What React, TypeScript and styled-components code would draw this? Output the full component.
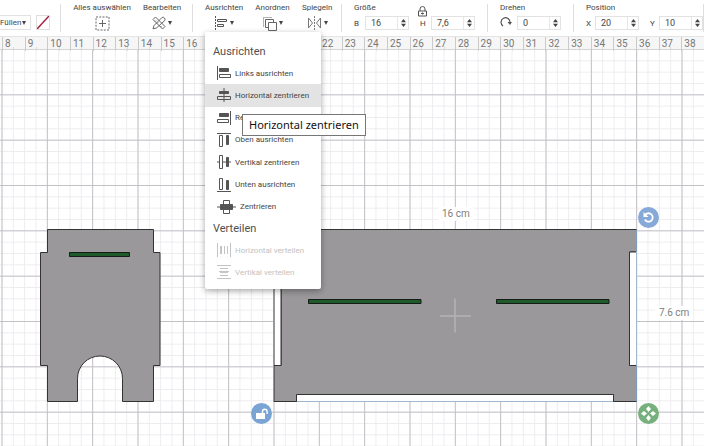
import React from "react";
import styled, { createGlobalStyle } from "styled-components";

const GlobalStyle = createGlobalStyle`
  * { box-sizing: border-box; }
  html, body, #root { height: 100%; }
  body {
    margin: 0;
    overflow: hidden;
    background: #fff;
    color: #444;
    font-family: Roboto, "Liberation Sans", sans-serif;
    font-size: 8px;
  }
  button, input { font: inherit; color: inherit; }
`;

const Editor = styled.div`
  display: flex;
  flex-direction: column;
  min-height: 100%;
`;

/* ---------- toolbar ---------- */

const Toolbar = styled.header`
  position: relative;
  display: flex;
  height: 36px;
  background: #fff;
`;

const Section = styled.div<{ $width: number }>`
  position: relative;
  display: flex;
  flex: 0 0 ${(p) => p.$width}px;
  gap: 12px;
  padding: 2px 0 0 12px;

  &:not(:last-child)::after {
    content: "";
    position: absolute;
    top: 4px;
    right: 0;
    height: 28px;
    border-right: 1px solid #dedede;
  }
`;

const FillSection = styled(Section)`
  align-items: flex-start;
  gap: 5px;
  padding: 15px 0 0;
`;

const FillButton = styled.button`
  display: flex;
  align-items: center;
  justify-content: space-between;
  width: 31px;
  height: 15px;
  padding: 0 4px 0 0;
  border: 1px solid #e2e2e2;
  border-left: 0;
  background: #fff;
`;

const Swatch = styled.button`
  width: 14px;
  height: 15px;
  padding: 0;
  border: 1px solid #e0dcde;
  background: #fff;

  svg { display: block; }
`;

const Tool = styled.div<{ $width: number }>`
  display: flex;
  flex-direction: column;
  align-items: center;
  flex: 0 0 ${(p) => p.$width}px;
`;

const Caption = styled.span`
  height: 11px;
  line-height: 11px;
  white-space: nowrap;
`;

const ToolButton = styled.button`
  display: flex;
  align-items: center;
  gap: 2px;
  height: 20px;
  padding: 0;
  border: 0;
  background: none;
`;

const Fields = styled.fieldset`
  display: flex;
  flex-direction: column;
  width: 100%;
  margin: 0;
  padding: 0;
  border: 0;
`;

const Legend = styled.legend`
  height: 11px;
  padding: 0;
  line-height: 11px;
`;

const FieldRow = styled.div`
  display: flex;
  align-items: center;
  gap: 11px;
  height: 20px;
`;

const Field = styled.label<{ $lead: number }>`
  position: relative;
  display: flex;
  align-items: center;
  width: ${(p) => p.$lead + 44}px;

  > span:first-child { width: ${(p) => p.$lead}px; }
`;

const LockButton = styled.button`
  position: absolute;
  left: -2px;
  bottom: 13px;
  height: 11px;
  padding: 0;
  border: 0;
  background: none;

  svg { display: block; }
`;

const NumberBox = styled.span`
  display: flex;
  align-items: center;
  flex: 1;
  height: 14px;
  border: 1px solid #e2e2e2;

  input {
    flex: 1;
    width: 100%;
    min-width: 0;
    padding: 0 0 0 5px;
    border: 0;
    outline: 0;
    background: none;
    font-size: 9px;
  }
`;

const Spinner = styled.span`
  display: flex;
  width: 11px;
  height: 12px;
  align-items: center;
  justify-content: center;
  border-left: 1px solid #e8e8e8;
`;

/* ---------- ruler ---------- */

const Ruler = styled.div`
  display: grid;
  grid-template-columns: repeat(31, 1fr);
  height: 14px;
  padding-left: 2px;
  border-top: 1px solid #e4e4e4;
  border-bottom: 1px solid #d4d4d4;
  background: #f6f6f6;
`;

const Mark = styled.span`
  padding-left: 2px;
  border-left: 1px solid #cacaca;
  background: linear-gradient(#d8d8d8, #d8d8d8) 50% 100% / 1px 4px no-repeat;
  color: #777;
  font-size: 10px;
  line-height: 14px;
`;

/* ---------- canvas ---------- */

const Canvas = styled.main`
  position: relative;
  flex: 1;
  overflow: hidden;
`;

const Scene = styled.svg`
  position: absolute;
  inset: 0;
  width: 100%;
  height: 100%;
`;

const Measure = styled.span<{ $x: number; $y: number }>`
  position: absolute;
  left: ${(p) => p.$x}px;
  top: ${(p) => p.$y}px;
  padding: 0 4px;
  background: #fff;
  color: #808080;
  font-size: 10px;
  line-height: 14px;
  white-space: nowrap;
`;

const Handle = styled.button<{ $x: number; $y: number; $color: string }>`
  position: absolute;
  left: ${(p) => p.$x}px;
  top: ${(p) => p.$y}px;
  display: grid;
  place-items: center;
  width: 21px;
  height: 21px;
  padding: 0;
  border: 0;
  border-radius: 50%;
  background: ${(p) => p.$color};
`;

/* ---------- menu ---------- */

const Menu = styled.div`
  position: absolute;
  z-index: 2;
  top: 32px;
  left: 205px;
  width: 116px;
  height: 257px;
  padding-top: 9px;
  border-radius: 2px;
  background: #fff;
  box-shadow: 0 2px 6px rgba(0, 0, 0, 0.35);
`;

const MenuHeading = styled.h2`
  margin: 0;
  padding: 1px 0 0 8px;
  color: #505050;
  font-size: 11px;
  font-weight: 400;
  line-height: 20px;
`;

const MenuList = styled.div<{ $height: number }>`
  display: grid;
  grid-auto-rows: 1fr;
  height: ${(p) => p.$height}px;
`;

const MenuItem = styled.button<{ $active?: boolean }>`
  display: flex;
  align-items: center;
  gap: 4px;
  padding: 0 0 0 12px;
  border: 0;
  background: ${(p) => (p.$active ? "#e3e3e3" : "transparent")};
  color: #444;
  white-space: nowrap;

  &:disabled { color: #c2c2c2; }
`;

const Tooltip = styled.div`
  position: absolute;
  z-index: 3;
  top: 114px;
  left: 242px;
  padding: 0 6px;
  border: 1px solid #767676;
  background: #fff;
  color: #111;
  font-family: "Noto Sans", "Open Sans", sans-serif;
  font-size: 11px;
  line-height: 20px;
  white-space: nowrap;
`;

/* ---------- icons ---------- */

const Caret = () => (
  <svg width="4" height="4" viewBox="0 0 4 4" aria-hidden="true">
    <path d="M0 0h4L2 4z" fill="#444" />
  </svg>
);

const SelectAllIcon = () => (
  <svg width="15" height="15" viewBox="0 0 15 15" fill="none" stroke="#666">
    <rect x="1" y="1" width="13" height="13" strokeDasharray="2 1.250" />
    <path d="M7.500 4v7M4 7.500h7" />
  </svg>
);

const EditIcon = () => (
  <svg width="14" height="14" viewBox="0 0 14 14" fill="none" stroke="#666">
    <path d="M1 12.800 2 9.500 10 1.500q1.500-.8 2.500.5t.3 2.500L4.500 12z" />
    <path d="M1 3.500 3.500 1l9.500 9.500-2.500 2.500zM3 5.500l1-1M5 7.500l1-1M8.500 11l1-1" />
  </svg>
);

const AlignIcon = () => (
  <svg width="14" height="14" viewBox="0 0 14 14" fill="none" stroke="#555">
    <path d="M1.500 0v14" strokeDasharray="2 1" />
    <path d="M3.500 3.500h9v2h-9zM3.500 8.500h6v2h-6z" />
  </svg>
);

const ArrangeIcon = () => (
  <svg width="15" height="15" viewBox="0 0 15 15" stroke="#666">
    <path d="M1.500 10.500v-9h9" fill="none" strokeDasharray="1 1" />
    <path d="M3.500 3.500h8v8h-8z" fill="#fff" />
    <path d="M6.500 6.500h8v8h-8z" fill="#fff" />
  </svg>
);

const MirrorIcon = () => (
  <svg width="15" height="14" viewBox="0 0 15 14" fill="none" stroke="#777">
    <path d="M1.500 2v10L5.500 7zM13.500 2v10l-4-5z" />
    <path d="M7.500 0v14" strokeDasharray="2 1" />
  </svg>
);

const LockIcon = () => (
  <svg width="9" height="11" viewBox="0 0 9 11" fill="none" stroke="#555">
    <path d="M2 5V3a2.500 2.500 0 0 1 5 0V5M.5 5h8v5h-8zM4.500 6.500v2M3 7.500h3" />
  </svg>
);

const RotateIcon = () => (
  <svg width="12" height="12" viewBox="0 0 12 12">
    <path d="M3 10A4.500 4.500 0 1 1 10 6.500" fill="none" stroke="#555" strokeWidth="1.200" />
    <path d="M7.500 6h4.500L10 9z" fill="#555" />
  </svg>
);

const StepperIcon = () => (
  <svg width="5" height="8" viewBox="0 0 5 8" fill="#444">
    <path d="M0 3.200 2.500 0 5 3.200zM0 4.800h5L2.500 8z" />
  </svg>
);

type MenuIconName =
  | "left" | "centerX" | "right" | "top" | "centerY" | "bottom" | "center" | "spreadX" | "spreadY";

const menuDrawings: Record<MenuIconName, React.ReactNode> = {
  left: (
    <>
      <path d="M.5 0v14" />
      <path d="M2.500 2.500h9v3h-9z" fill="#555" />
      <path d="M2.500 8.500h11v3h-11z" />
    </>
  ),
  centerX: (
    <>
      <path d="M2.500 3.500h9v2h-9z" fill="#555" />
      <path d="M.5 8.500h13v3H.5z" />
      <path d="M7 0v14" />
    </>
  ),
  right: (
    <>
      <path d="M13.500 0v14" />
      <path d="M2.500 2.500h9v3h-9z" fill="#555" />
      <path d="M.5 8.500h11v3H.5z" />
    </>
  ),
  top: (
    <>
      <path d="M0 .5h14" />
      <path d="M2.500 2.500h3v11h-3z" />
      <path d="M9.500 2.500h2v9h-2z" fill="#555" />
    </>
  ),
  centerY: (
    <>
      <path d="M0 7h14" />
      <path d="M2.500 .5h3v13h-3z" fill="#fff" />
      <path d="M9.500 2.500h2v9h-2z" fill="#555" />
    </>
  ),
  bottom: (
    <>
      <path d="M0 13.500h14" />
      <path d="M2.500 .5h3v11h-3z" />
      <path d="M9.500 2.500h2v9h-2z" fill="#555" />
    </>
  ),
  center: (
    <>
      <path d="M6.500 .5h6v13h-6z" fill="#fff" />
      <path d="M3.500 4.500h12v5h-12z" fill="#555" />
      <path d="M0 7h19" />
    </>
  ),
  spreadX: <path d="M.5 0v14M13.500 0v14M3.500 3v8M4.500 3v8M7.500 3v8M10.500 3v8" />,
  spreadY: <path d="M0 .5h14M0 13.500h14M3 3.500h8M2 6.500h10M3 7.500h8M3 10.500h8" />,
};

const MenuIcon = ({ name }: { name: MenuIconName }) => {
  const width = name === "center" ? 19 : 14;
  const muted = name === "spreadX" || name === "spreadY";
  return (
    <svg width={width} height="14" viewBox={`0 0 ${width} 14`} fill="none" stroke={muted ? "#c4c4c4" : "#555"} aria-hidden="true">
      {menuDrawings[name]}
    </svg>
  );
};

/* ---------- parts ---------- */

const alignItems: { label: string; icon: MenuIconName }[] = [
  { label: "Links ausrichten", icon: "left" },
  { label: "Horizontal zentrieren", icon: "centerX" },
  { label: "Rechts ausrichten", icon: "right" },
  { label: "Oben ausrichten", icon: "top" },
  { label: "Vertikal zentrieren", icon: "centerY" },
  { label: "Unten ausrichten", icon: "bottom" },
  { label: "Zentrieren", icon: "center" },
];

const spreadItems: { label: string; icon: MenuIconName }[] = [
  { label: "Horizontal verteilen", icon: "spreadX" },
  { label: "Vertikal verteilen", icon: "spreadY" },
];

const NumberField = ({ lead, lock, children, value, name }: {
  lead: number; lock?: boolean; children: React.ReactNode; value: string; name: string;
}) => (
  <Field $lead={lead}>
    <span>{children}</span>
    {lock && <LockButton aria-label="Proportionen sperren"><LockIcon /></LockButton>}
    <NumberBox>
      <input aria-label={name} defaultValue={value} />
      <Spinner><StepperIcon /></Spinner>
    </NumberBox>
  </Field>
);

const ToolItem = ({ label, width, icon, menu = true }: {
  label: string; width: number; icon: React.ReactNode; menu?: boolean;
}) => (
  <Tool $width={width}>
    <Caption>{label}</Caption>
    <ToolButton aria-label={label}>
      {icon}
      {menu && <Caret />}
    </ToolButton>
  </Tool>
);

const marks = Array.from({ length: 31 }, (_, i) => i + 8);
const MAJOR = 136 / 3;
const MINOR = MAJOR / 4;

const Drawing = () => (
  <Scene aria-hidden="true">
    <defs>
      <pattern id="minor" x="1.500" y="-1" width={MINOR} height={MINOR} patternUnits="userSpaceOnUse">
        <path d={`M.5 0V${MINOR}M0 .5H${MINOR}`} stroke="#edebef" fill="none" />
      </pattern>
      <pattern id="major" x="1.500" y="-1" width={MAJOR} height={MAJOR} patternUnits="userSpaceOnUse">
        <path d={`M.5 0V${MAJOR}M0 .5H${MAJOR}`} stroke="#c3c1c6" fill="none" />
      </pattern>
    </defs>
    <rect width="100%" height="100%" fill="url(#minor)" />
    <rect width="100%" height="100%" fill="url(#major)" />

    <g fill="#9a989a" stroke="#333">
      <path d="M47.500 179.500h106v23h6.500v113h-6.500v36h-31v-23a22.500 22.500 0 0 0-45 0v23h-30v-36h-7v-113h7z" />
      <path d="M274 179.500h362.500v22.500h-7v113.500h7v36h-23v-7H296.500v7H274v-36h7V202h-7z" />
    </g>
    <path d="M629.500 202h7v113.500h-7zM274 202h7v113.500h-7zM296.500 344.500h317v7h-317z" fill="#fff" stroke="#333" />
    <path d="M273.500 179.500V351.500M636.500 179.500V351.500" stroke="#7f9dbb" />
    <path d="M636.500 202.500v112.500M297 351.500h316" stroke="#fff" />
    <path d="M636.500 202.500v112.500M297 351.500h316" stroke="#9fb6cc" />
    <g fill="#1f5a2b" stroke="#151b16">
      <path d="M69.500 202.500h60v4h-60zM308.500 249.500h112.500v4H308.500zM496.500 249.500H609v4H496.500z" />
    </g>
    <path d="M455 248.500v34M440 266h31" stroke="#b4b3b5" strokeWidth="1.500" />
  </Scene>
);

export default function App() {
  return (
    <Editor>
      <GlobalStyle />
      <Toolbar>
        <FillSection $width={61}>
          <FillButton>Füllen <Caret /></FillButton>
          <Swatch aria-label="Keine Füllung">
            <svg width="12" height="13" viewBox="0 0 12 13">
              <path d="M0 13 12 0" stroke="#a51c3c" strokeWidth="1.500" />
            </svg>
          </Swatch>
        </FillSection>
        <Section $width={132}>
          <ToolItem label="Alles auswählen" width={58} icon={<SelectAllIcon />} menu={false} />
          <ToolItem label="Bearbeiten" width={38} icon={<EditIcon />} />
        </Section>
        <Section $width={149}>
          <ToolItem label="Ausrichten" width={37} icon={<AlignIcon />} />
          <ToolItem label="Anordnen" width={34} icon={<ArrangeIcon />} />
          <ToolItem label="Spiegeln" width={31} icon={<MirrorIcon />} />
        </Section>
        <Section $width={146}>
          <Fields>
            <Legend>Größe</Legend>
            <FieldRow>
              <NumberField lead={11} value="16" name="Breite">B</NumberField>
              <NumberField lead={11} value="7,6" name="Höhe" lock>H</NumberField>
            </FieldRow>
          </Fields>
        </Section>
        <Section $width={86}>
          <Fields>
            <Legend>Drehen</Legend>
            <FieldRow>
              <NumberField lead={17} value="0" name="Winkel"><RotateIcon /></NumberField>
            </FieldRow>
          </Fields>
        </Section>
        <Section $width={130}>
          <Fields>
            <Legend>Position</Legend>
            <FieldRow>
              <NumberField lead={9} value="20" name="X">X</NumberField>
              <NumberField lead={9} value="10" name="Y">Y</NumberField>
            </FieldRow>
          </Fields>
        </Section>
        <Menu>
          <MenuHeading>Ausrichten</MenuHeading>
          <MenuList $height={156}>
            {alignItems.map((item, i) => (
              <MenuItem key={item.label} $active={i === 1}>
                <MenuIcon name={item.icon} />
                {item.label}
              </MenuItem>
            ))}
          </MenuList>
          <MenuHeading>Verteilen</MenuHeading>
          <MenuList $height={44}>
            {spreadItems.map((item) => (
              <MenuItem key={item.label} disabled>
                <MenuIcon name={item.icon} />
                {item.label}
              </MenuItem>
            ))}
          </MenuList>
        </Menu>
        <Tooltip role="tooltip">Horizontal zentrieren</Tooltip>
      </Toolbar>
      <Ruler>
        {marks.map((n) => <Mark key={n}>{n}</Mark>)}
      </Ruler>
      <Canvas>
        <Drawing />
        <Measure $x={438} $y={157}>16 cm</Measure>
        <Measure $x={655} $y={256}>7.6 cm</Measure>
        <Handle $x={638} $y={157} $color="#86a9d8" aria-label="Drehen">
          <svg width="13" height="13" viewBox="0 0 13 13">
            <path d="M3.500 3.500A4.200 4.200 0 1 1 2.800 8.500" fill="none" stroke="#fff" strokeWidth="1.800" />
            <path d="M1.500 1v5h5z" fill="#fff" />
          </svg>
        </Handle>
        <Handle $x={251} $y={353} $color="#79a4d4" aria-label="Entsperren">
          <svg width="14" height="12" viewBox="0 0 14 12">
            <path d="M1 5h9v6H1z" fill="#fff" />
            <path d="M7.500 6V3.500a2.300 2.300 0 0 1 4.600 0V6" fill="none" stroke="#fff" strokeWidth="1.400" />
          </svg>
        </Handle>
        <Handle $x={638} $y={353} $color="#76b07c" aria-label="Verschieben">
          <svg width="15" height="15" viewBox="0 0 15 15" fill="#fff">
            <path d="M7.500 0 10 3 7.500 6 5 3zM7.500 9l2.500 3-2.500 3L5 12zM0 7.500 3 5l3 2.500L3 10zM9 7.500 12 5l3 2.500-3 2.500z" />
          </svg>
        </Handle>
      </Canvas>
    </Editor>
  );
}
